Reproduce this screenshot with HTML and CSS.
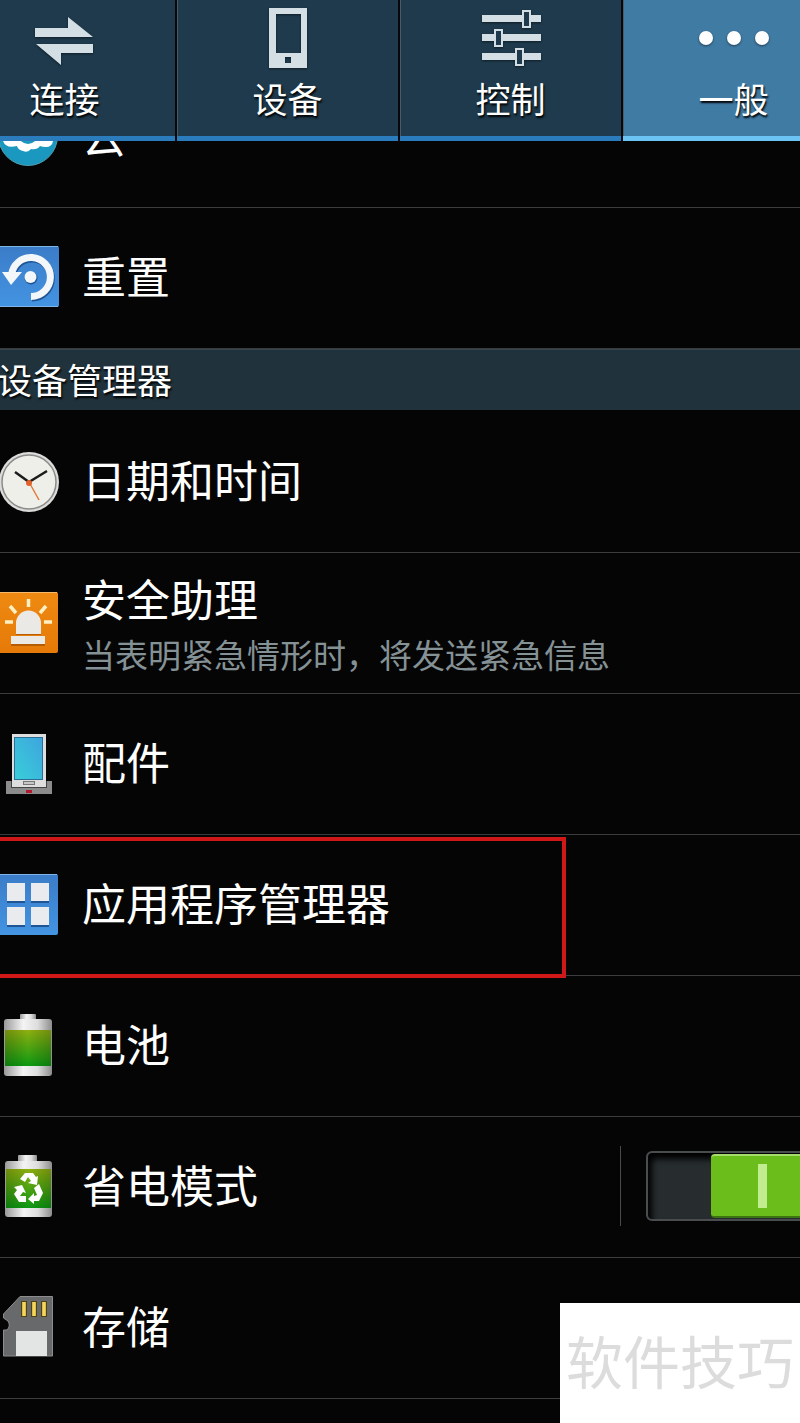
FILE: index.html
```html
<!DOCTYPE html>
<html lang="zh-CN">
	<head>
		<meta charset="UTF-8">
		<title>设置</title>
		<meta name="viewport" content="width=device-width, initial-scale=1.0">
		<link rel="stylesheet" href="styles.css">
	</head>
	<body>

		<nav class="tabs">
			<a class="tab" href="#">
				<svg width="70" height="60" viewBox="0 0 70 60"><path fill="#d3dfe5" d="M5 20H38V9L63 29H5zM6 36H63V45H31V57z"/></svg>
				<span>连接</span>
			</a>
			<a class="tab" href="#">
				<svg width="70" height="60" viewBox="0 0 70 60"><path fill="#d3dfe5" fill-rule="evenodd" d="M16 0H54V60H16zM23 6V45H48V6zM32 49V55H38V49z"/></svg>
				<span>设备</span>
			</a>
			<a class="tab" href="#">
				<svg width="70" height="60" viewBox="0 0 70 60">
					<path fill="#d3dfe5" d="M6 7H65V14H6zM6 26H65V33H6zM6 45H65V52H6z"/>
					<path fill="#1e3a4c" stroke="#d3dfe5" stroke-width="2" d="M47 3H54V19H47zM19 22H26V38H19zM40 41H47V57H40z"/>
				</svg>
				<span>控制</span>
			</a>
			<a class="tab active" href="#">
				<svg width="70" height="60" viewBox="0 0 70 60">
					<circle cx="7" cy="30" r="7" fill="#fff"/>
					<circle cx="35" cy="30" r="7" fill="#fff"/>
					<circle cx="63" cy="30" r="7" fill="#fff"/>
				</svg>
				<span>一般</span>
			</a>
		</nav>

		<main class="list">
			<a class="row" href="#">
				<svg class="icon" viewBox="0 0 60 62">
					<circle cx="28" cy="31" r="29.500" fill="#1a98bf" stroke="#4f9fb2"/>
					<path fill="#fff" d="M3 36Q5 30 12 31H44Q51 30 53 36Q52 42 46 42Q42 42 40 41Q37 45 31 44Q28 48 23 46Q18 45 17 41Q6 44 3 36z"/>
					<circle cx="28" cy="29" r="10" fill="#1a98bf"/>
					<circle cx="28" cy="29" r="7" fill="#62bdd4"/>
				</svg>
				<span class="name">云</span>
			</a>
			<a class="row" href="#">
				<svg class="icon" viewBox="0 0 60 62">
					<defs>
						<linearGradient id="blue" x1="0" y1="0" x2="0" y2="1">
							<stop offset="0" stop-color="#3b7cc8"/>
							<stop offset="1" stop-color="#4394e2"/>
						</linearGradient>
					</defs>
					<rect x="-3" y="0" width="62" height="61" rx="2" fill="url(#blue)"/>
					<path stroke="#80b5ea" d="M0 .5H58M0 60.500H58" fill="none"/>
					<path fill="none" stroke="#1f5594" stroke-width="7" d="M32 52A19.500 19.500 0 1 0 12.500 30"/>
					<path fill="none" stroke="#f3f7fa" stroke-width="7" d="M31 50.500A19.500 19.500 0 1 0 11.500 29"/>
					<path fill="#f3f7fa" d="M2 26H22L11 39z"/>
					<circle cx="31" cy="32" r="6.500" fill="#1f5594"/>
					<circle cx="30.500" cy="31" r="6" fill="#f3f7fa"/>
				</svg>
				<span class="name">重置</span>
			</a>

			<h2 class="group">设备管理器</h2>

			<a class="row" href="#">
				<svg class="icon" viewBox="0 0 60 62">
					<circle cx="29" cy="32" r="30" fill="#dcdcda"/>
					<circle cx="29" cy="32" r="27" fill="#efefea" stroke="#8b8b8b" stroke-width="1.500"/>
					<path stroke="#1c1c1c" stroke-width="2.500" fill="none" d="M15 22L29 32L47 21"/>
					<path stroke="#e07b3c" stroke-width="1.500" d="M29 32L39 50"/>
					<circle cx="29" cy="33" r="3" fill="#e0622c"/>
				</svg>
				<span class="name">日期和时间</span>
			</a>
			<a class="row" href="#">
				<svg class="icon" viewBox="0 0 60 62">
					<defs>
						<linearGradient id="orange" x1="0" y1="0" x2="0" y2="1">
							<stop offset="0" stop-color="#ee8a12"/>
							<stop offset="1" stop-color="#e67a08"/>
						</linearGradient>
					</defs>
					<rect x="-3" y="1" width="61" height="61" rx="2" fill="url(#orange)"/>
					<path stroke="#f7ba6c" d="M0 1.500H57" fill="none"/>
					<path fill="#b55c05" d="M16 43V44H41V43zM11 53V55H45V53z"/>
					<path fill="#ebe9e6" d="M16 43V32A12.500 12.500 0 0 1 41 32V43zM11 45H45V53H11z"/>
					<path stroke="#fff0c4" stroke-width="3.500" d="M28.500 8V16M10 15L16 22M46 15L40 22M5 31H13M44 31H52"/>
				</svg>
				<span class="name">安全助理<small>当表明紧急情形时，将发送紧急信息</small></span>
			</a>
			<a class="row" href="#">
				<svg class="icon" viewBox="0 0 60 62">
					<defs>
						<linearGradient id="screen" x1="1" y1="0" x2="0" y2="1">
							<stop offset="0" stop-color="#3ea4de"/>
							<stop offset="1" stop-color="#38cfd8"/>
						</linearGradient>
					</defs>
					<rect x="6" y="49" width="46" height="13" fill="#8c8c8c"/>
					<rect x="11" y="49" width="36" height="7" fill="#444"/>
					<rect x="12" y="2" width="34" height="53" fill="#dedede"/>
					<rect x="14.500" y="5.500" width="28" height="42" fill="url(#screen)" stroke="#2b6f96"/>
					<rect x="23.500" y="49.500" width="11" height="3" fill="#c6c6c6" stroke="#777"/>
					<rect x="26" y="58" width="6" height="3" fill="#b3182c"/>
				</svg>
				<span class="name">配件</span>
			</a>
			<a class="row marked" href="#">
				<svg class="icon" viewBox="0 0 60 62">
					<rect x="-3" y="1" width="61" height="61" rx="2" fill="url(#blue)"/>
					<path stroke="#80b5ea" d="M0 1.500H57" fill="none"/>
					<path fill="#1f5594" d="M7 11H25V30H7zM31 11H49V30H31zM7 35H25V54H7zM31 35H49V54H31z"/>
					<path fill="#e9ebee" d="M7 10H25V28H7zM31 10H49V28H31zM7 34H25V52H7zM31 34H49V52H31z"/>
				</svg>
				<span class="name">应用程序管理器</span>
			</a>
			<a class="row" href="#">
				<svg class="icon" viewBox="0 0 60 62">
					<defs>
						<linearGradient id="metal">
							<stop offset="0" stop-color="#999"/>
							<stop offset=".4" stop-color="#f4f4f4"/>
							<stop offset=".7" stop-color="#ddd"/>
							<stop offset="1" stop-color="#8d8d8d"/>
						</linearGradient>
						<linearGradient id="green" x1="0" y1="0" x2="0" y2="1">
							<stop offset="0" stop-color="#8fb010"/>
							<stop offset="1" stop-color="#0c9a12"/>
						</linearGradient>
						<linearGradient id="shade">
							<stop offset="0" stop-color="#000" stop-opacity=".2"/>
							<stop offset=".5" stop-color="#000" stop-opacity="0"/>
							<stop offset="1" stop-color="#000" stop-opacity=".2"/>
						</linearGradient>
					</defs>
					<rect x="20" y="0" width="16" height="6" rx="1" fill="url(#metal)"/>
					<rect x="4" y="5" width="48" height="57" rx="3" fill="url(#metal)"/>
					<rect x="5" y="16" width="46" height="36" fill="url(#green)"/>
					<rect x="5" y="16" width="46" height="36" fill="url(#shade)"/>
				</svg>
				<span class="name">电池</span>
			</a>
			<div class="row">
				<svg class="icon" viewBox="0 0 60 62">
					<rect x="18" y="0" width="19" height="7" rx="1" fill="url(#metal)"/>
					<rect x="5" y="6" width="47" height="56" rx="3" fill="url(#metal)"/>
					<rect x="6" y="14" width="45" height="39" fill="url(#green)"/>
					<rect x="6" y="14" width="45" height="39" fill="url(#shade)"/>
					<path fill="#fff" d="M25 18H33L36 22L38 21L37 30L28 28L31 26L28 22L25 27L20 24zM14 32L22 30L26 38L23 37L20 41H26V47H19L14 39L17 35zM34 33L39 29L43 38L39 46H34V49L28 44L34 38V41L37 40z"/>
				</svg>
				<label class="name" for="saving">省电模式</label>
				<span class="sep"></span>
				<input class="switch" id="saving" type="checkbox" checked>
			</div>
			<a class="row" href="#">
				<svg class="icon" viewBox="0 0 60 62">
					<defs>
						<linearGradient id="gold">
							<stop offset="0" stop-color="#c9a21a"/>
							<stop offset=".5" stop-color="#f8e27a"/>
							<stop offset="1" stop-color="#d0a51c"/>
						</linearGradient>
					</defs>
					<path fill="#67696b" stroke="#8b8d8f" d="M20 .5H52.500V60H3.500V34H7Q11 30 8 25L3.500 22V18z"/>
					<g fill="url(#gold)" stroke="#4c4418">
						<rect x="21.500" y="5.500" width="5" height="15"/>
						<rect x="31.500" y="5.500" width="5" height="15"/>
						<rect x="41.500" y="5.500" width="5" height="15"/>
					</g>
					<rect x="16" y="35" width="31" height="25" fill="#e3e4e4"/>
				</svg>
				<span class="name">存储</span>
			</a>
		</main>

		<div class="watermark">软件技巧</div>

	</body>
</html>
```
FILE: styles.css
```css
*,
*::before,
*::after{
	margin: 0;
	padding: 0;
	box-sizing: border-box;
}
html{
	background: #050505;
}
body{
	min-height: 100vh;
	overflow-x: hidden;
	color: #fff;
	font-family: "Noto Sans CJK SC", sans-serif;
}
a{
	color: inherit;
	text-decoration: none;
}

/* 顶部标签 */
.tabs{
	position: fixed;
	top: 0;
	left: -46px;
	right: -46px;
	z-index: 10;
	display: flex;
	background: #08080c;
}
.tab{
	flex: 1;
	display: flex;
	flex-direction: column;
	align-items: center;
	gap: 10px;
	height: 141px;
	padding-top: 8px;
	border-bottom: 5px solid #2b7cbc;
	background: #1e3a4c;
	box-shadow: inset 1px 0 #4a5b67;
	margin-right: 2px;
	font-size: 35px;
	line-height: 40px;
	text-shadow: 1px 2px 2px #000;
}
.tab svg{
	filter: drop-shadow(0 1px 1px rgba(0,0,0,.5));
}
.tab.active{
	background: #407ba4;
	border-bottom-color: #6cc4f5;
}

/* 列表 */
.list{
	padding-top: 67px;
}
.row{
	position: relative;
	display: flex;
	align-items: center;
	gap: 22px;
	height: 141px;
	padding-bottom: 2px;
	border-bottom: 1px solid #3c3c3c;
}
.icon{
	flex: none;
	width: 60px;
	height: 62px;
}
.name{
	flex: 1;
	padding-bottom: 4px;
	font-size: 44px;
	line-height: 68px;
}
.name small{
	display: block;
	color: #849195;
	font-size: 33px;
	line-height: 44px;
}
.group{
	height: 61px;
	margin-bottom: 2px;
	background: #20323b;
	border-top: 1px solid #34464e;
	font-size: 35px;
	font-weight: normal;
	line-height: 58px;
	text-indent: -3px;
	text-shadow: 1px 2px 2px #000;
}
.marked::after{
	content: "";
	position: absolute;
	top: 2px;
	left: -4px;
	z-index: 1;
	width: 570px;
	height: 141px;
	border: 4px solid #d01818;
}

/* 开关 */
.sep{
	width: 1px;
	height: 80px;
	background: #4a4a4a;
}
.switch{
	appearance: none;
	flex: none;
	width: 170px;
	height: 70px;
	margin: 0 -16px 0 3px;
	padding: 1px;
	border: 2px solid #4a4d4e;
	border-radius: 6px;
	background: #272d2f;
	box-shadow: inset 4px 6px 6px #000;
}
.switch::before{
	content: "";
	display: block;
	width: 102px;
	height: 64px;
	margin-left: auto;
	border-top: 2px solid #a5dc6c;
	border-bottom: 2px solid #3d7412;
	border-radius: 4px;
	background: linear-gradient(#c1ec90, #c1ec90) center / 9px 44px no-repeat #6bbd1c;
}
.switch:not(:checked)::before{
	margin-left: 0;
	background-color: #555;
}

/* 水印 */
.watermark{
	position: fixed;
	right: 0;
	bottom: 0;
	z-index: 20;
	width: 240px;
	height: 120px;
	background: #fff;
	color: #dcdcdc;
	font-size: 57px;
	line-height: 112px;
	text-align: center;
}
```
